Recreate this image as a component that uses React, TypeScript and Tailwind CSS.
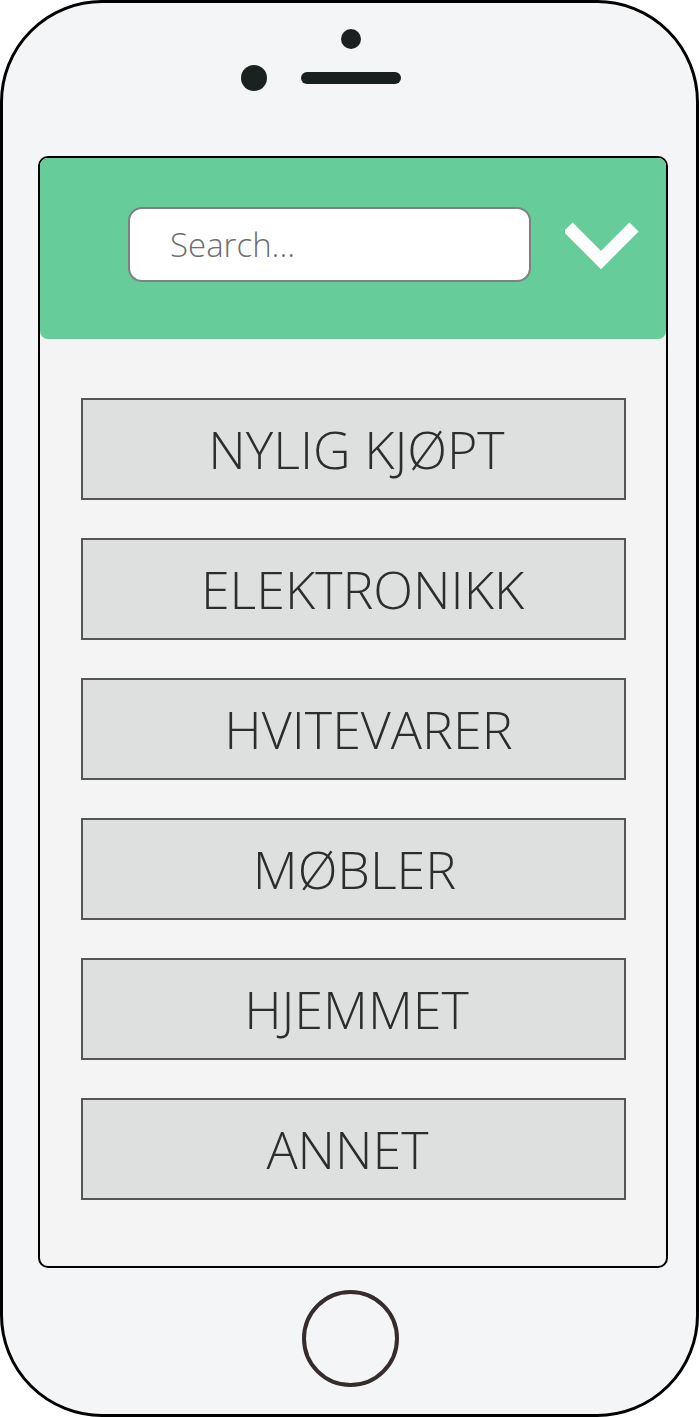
import React from "react";

const items: { label: string; ml: string }[] = [
  { label: "NYLIG KJØPT", ml: "ml-[6px]" },
  { label: "ELEKTRONIKK", ml: "ml-[18px]" },
  { label: "HVITEVARER", ml: "ml-[30px]" },
  { label: "MØBLER", ml: "ml-[2px]" },
  { label: "HJEMMET", ml: "ml-[6px]" },
  { label: "ANNET", ml: "ml-[-12px]" },
];

export default function App() {
  return (
    <div className="w-[699px] h-[1417px] bg-white" style={{ fontFamily: '"Open Sans", "Noto Sans", sans-serif' }}>
      <div className="w-[699px] h-[1417px] rounded-[102px] border-[3px] border-black bg-[#f4f5f7] flex flex-col items-start">
        {/* top hardware */}
        <div className="relative w-full h-[153px]">
          <div className="absolute left-[338px] top-[26px] w-[20px] h-[20px] rounded-full bg-[#1a221f]" />
          <div className="absolute left-[238px] top-[62px] w-[26px] h-[26px] rounded-full bg-[#1a221f]" />
          <div className="absolute left-[298px] top-[69px] w-[100px] h-[12px] rounded-full bg-[#17201c]" />
        </div>
        {/* screen */}
        <div className="w-[630px] h-[1112px] ml-[35px] border-2 border-black rounded-[10px] bg-[#f4f4f4] overflow-hidden flex flex-col">
          <div className="h-[181px] bg-[#66cc99] flex items-start pt-[49px] pl-[88px] rounded-b-[8px]">
            <div className="w-[403px] h-[75px] bg-white border-2 border-[#808080] rounded-[14px] flex items-center pl-[40px]">
              <span className="text-[33px] font-[350] text-[#6e6e6e] leading-none">Search...</span>
            </div>
            <div className="ml-[34px] mt-[11px]">
              <svg width="74" height="52" viewBox="0 0 74 52">
                <path d="M3 9 L36 42 L69 9" fill="none" stroke="white" strokeWidth="13" />
              </svg>
            </div>
          </div>
          <div className="flex flex-col gap-[38px] pt-[59px] pl-[41px]">
            {items.map((it) => (
              <div
                key={it.label}
                className="w-[545px] h-[102px] bg-[#dde0df] border-2 border-[#555555] flex items-center justify-center"
              >
                <span className={`text-[52px] font-[350] text-[#2d2d2d] leading-none ${it.ml}`}>{it.label}</span>
              </div>
            ))}
          </div>
        </div>
        {/* home button */}
        <div className="mt-[22px] ml-[299px] w-[97px] h-[97px] rounded-full border-4 border-[#362c2c]" />
      </div>
    </div>
  );
}
